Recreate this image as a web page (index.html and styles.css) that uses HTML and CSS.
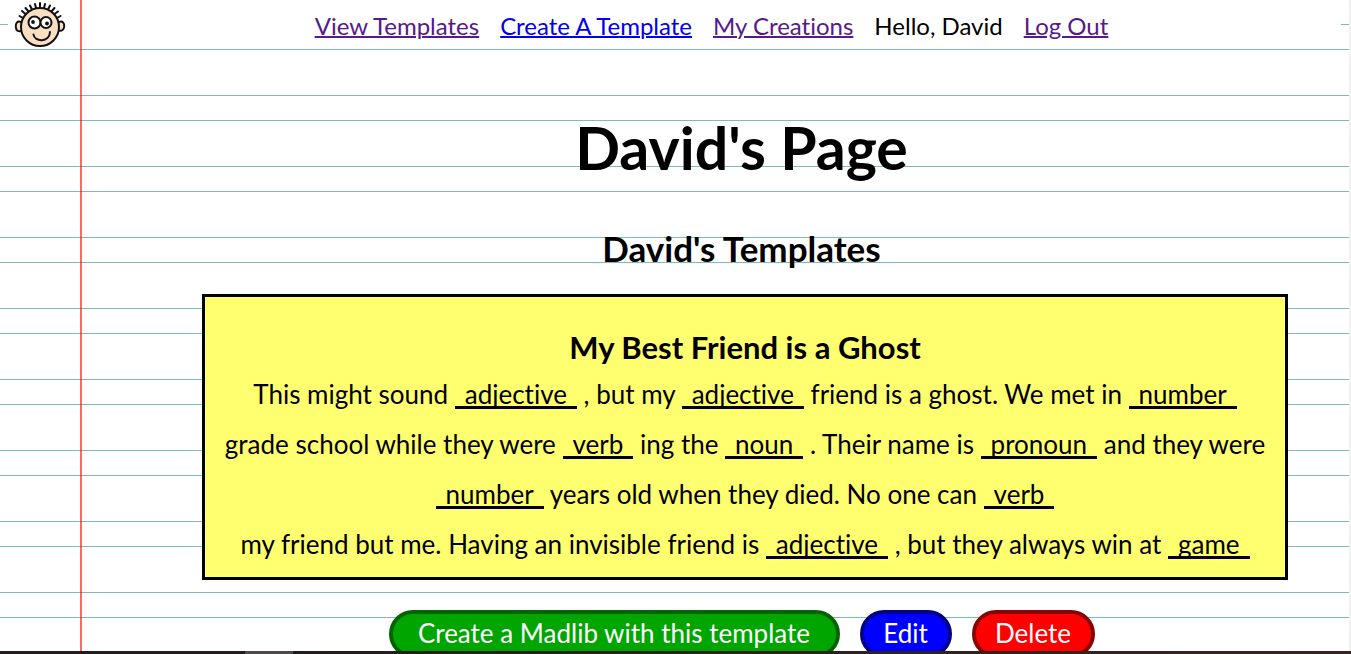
FILE: index.html
```html
<!DOCTYPE html>
<html lang="en">
<head>
<meta charset="utf-8">
<meta name="viewport" content="width=device-width, initial-scale=1">
<title>David's Page</title>
<link rel="stylesheet" href="styles.css">
</head>
<body>
<div class="paper">
  <header class="site-header">
    <a class="logo" href="#" aria-label="Home">
      <svg class="logo-face" viewBox="0 0 52 50" aria-hidden="true">
        <g stroke="#111" stroke-width="2" stroke-linecap="round" stroke-linejoin="round" fill="none">
          <path d="M9 18 5.500 16M11.500 14 8 11M14.500 11.500 11.500 8M18 9.500 16 5.500M22 8 21 4M26 7.500V3M30 8l1-4M34 9.500 36 5.500M37.500 11.500 40.500 8M40.500 14 44 11.500M43 18 46.500 16"/>
          <path fill="#fbdfc3" d="M7 22C3 20.500 1.500 23.500 1.800 27S4 32 7.500 31M45 22c4-1.500 5.500 1.500 5.200 4.500S48 31.500 44.500 30.500"/>
          <circle cx="26" cy="27" r="19" fill="#fbdfc3"/>
          <circle cx="20.500" cy="22.500" r="6" fill="#fff"/>
          <circle cx="32" cy="22.500" r="5.500" fill="#fff"/>
          <path d="M19.500 34.500c1 8 16 8 16.500-2.500"/>
        </g>
        <circle cx="19" cy="22" r="1.900" fill="#111"/>
        <circle cx="33" cy="23.500" r="1.900" fill="#111"/>
      </svg>
    </a>
    <nav class="site-nav">
      <a class="nav-link visited" href="#">View Templates</a>
      <a class="nav-link" href="#">Create A Template</a>
      <a class="nav-link visited" href="#">My Creations</a>
      <span>Hello, David</span>
      <a class="nav-link visited" href="#">Log Out</a>
    </nav>
  </header>
  <main class="content">
    <h1 class="page-title">David's Page</h1>
    <h2 class="section-title">David's Templates</h2>
    <article class="template-card">
      <h3 class="template-title">My Best Friend is a Ghost</h3>
      <p class="story">
        <span class="line">This might sound <span class="blank">adjective</span> , but my <span class="blank">adjective</span> friend is a ghost. We met in <span class="blank">number</span></span>
        <span class="line">grade school while they were <span class="blank">verb</span> ing the <span class="blank">noun</span> . Their name is <span class="blank">pronoun</span> and they were</span>
        <span class="line"><span class="blank">number</span> years old when they died. No one can <span class="blank">verb</span></span>
        <span class="line">my friend but me. Having an invisible friend is <span class="blank">adjective</span> , but they always win at <span class="blank">game</span></span>
      </p>
    </article>
    <div class="actions">
      <button class="button create" type="button">Create a Madlib with this template</button>
      <button class="button edit" type="button">Edit</button>
      <button class="button delete" type="button">Delete</button>
    </div>
  </main>
</div>
<div class="scroll-edge"></div>
<div class="bottom-edge"></div>
</body>
</html>
```
FILE: styles.css
```css
* {
  box-sizing: border-box;
}

html {
  height: 100%;
}

body {
  height: 100%;
  margin: 0;
  overflow: hidden;
  background: #fff;
  color: #000;
  font-family: Lato, "Noto Sans", sans-serif;
  font-size: 26px;
  font-variant-ligatures: none;
}

/* Ruled paper: pairs of lines repeating every 71px */
.paper {
  position: relative;
  min-height: 100%;
  padding: 0 8px;
  margin-right: 2px;
  background: repeating-linear-gradient(
    to bottom,
    transparent 0 24px,
    #7bbcb9 24px 25px,
    transparent 25px 49px,
    #7bbcb9 49px 50px,
    transparent 50px 71px
  );
}

/* Red margin line */
.paper::after {
  content: "";
  position: absolute;
  top: 0;
  bottom: 0;
  left: 80px;
  width: 2px;
  background: rgba(255, 0, 0, 0.6);
  pointer-events: none;
}

.site-header {
  display: flex;
  align-items: center;
  height: 49px;
  background: #fff;
}

.logo {
  display: block;
  margin-left: 6px;
}

.logo-face {
  display: block;
  width: 52px;
  height: 50px;
}

.site-nav {
  display: flex;
  flex: 1;
  justify-content: center;
  gap: 21px;
  padding: 2px 0 0 16px;
  font-size: 24px;
  line-height: 30px;
  white-space: nowrap;
}

.nav-link {
  color: #0000ee;
  text-decoration-thickness: 2px;
}

.nav-link.visited {
  color: #551a8b;
}

.content {
  margin-left: 134px;
}

.page-title {
  margin: 63px 0 0;
  font-size: 59px;
  line-height: 72px;
  text-align: center;
}

.section-title {
  margin: 44px 0 0;
  font-size: 35px;
  line-height: 40px;
  text-align: center;
}

.template-card {
  margin: 26px 53px 0 60px;
  padding: 31px 0 8px;
  border: 3px solid #000;
  background: #ffff70;
  text-align: center;
}

.template-title {
  margin: 0 0 2px;
  font-size: 31px;
  line-height: 39px;
}

.story {
  margin: 0;
  line-height: 50px;
  white-space: nowrap;
}

.line {
  display: block;
}

.blank {
  display: inline-block;
  padding: 0 10px;
  border-bottom: 3px solid #000;
  line-height: 24px;
}

.actions {
  display: flex;
  justify-content: center;
  gap: 20px;
  margin-top: 30px;
}

.button {
  height: 48px;
  padding: 0 0 2px;
  border: 4px solid;
  border-radius: 24px;
  color: #fff;
  font: inherit;
}

.create {
  width: 451px;
  border-color: #006400;
  background: #00a500;
}

.edit {
  width: 92px;
  border-color: #00008b;
  background: #0000ff;
}

.delete {
  width: 123px;
  border-color: #8b0000;
  background: #ff0000;
}

.scroll-edge {
  position: absolute;
  top: 0;
  right: 0;
  bottom: 0;
  width: 2px;
  background: #f0f0f0;
}

.bottom-edge {
  position: absolute;
  right: 0;
  bottom: 0;
  left: 0;
  height: 3px;
  background: linear-gradient(to right, #241c1c 245px, #4f4a4a 245px 293px, #241c1c 293px, #382522);
}
```
